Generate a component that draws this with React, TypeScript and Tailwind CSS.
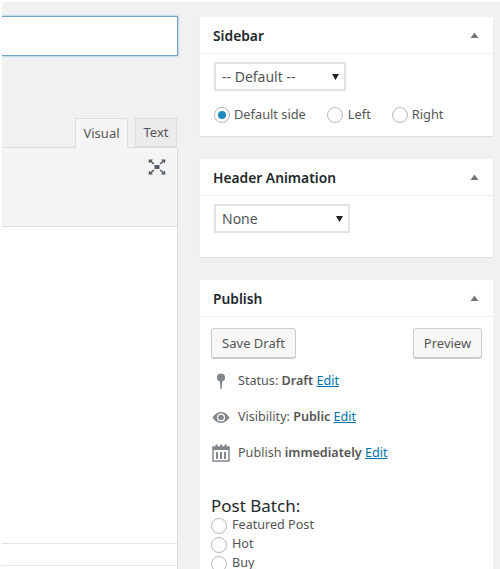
import React from 'react';

const font = "font-['Noto_Sans',sans-serif]";

const Caret = () => (
  <svg width="9" height="6" viewBox="0 0 9 6" className="text-[#72777c]">
    <path d="M0.5 6 L4.5 0.5 L8.5 6 Z" fill="currentColor" />
  </svg>
);

const SelectBox = ({ label, width }: { label: string; width: string }) => (
  <div className={`flex h-[29px] items-center justify-between border-2 border-[#e3e3e3] bg-white pl-[6px] pr-[5px] text-[14px] text-[#555] ${width}`}>
    <span>{label}</span>
    <svg width="7" height="6" viewBox="0 0 7 6">
      <path d="M0 0 H7 L3.5 6 Z" fill="#222" />
    </svg>
  </div>
);

const Radio = ({ checked }: { checked?: boolean }) => (
  <span className="flex h-[16px] w-[16px] shrink-0 items-center justify-center rounded-full border border-[#b4b9be] bg-white">
    {checked && <span className="h-[8px] w-[8px] rounded-full bg-[#1e8cbe]" />}
  </span>
);

const PanelHead = ({ title }: { title: string }) => (
  <div className="flex h-[37px] items-center justify-between border-b border-[#eee] pl-[13px] pr-[14px]">
    <h2 className="pt-[2px] text-[13.8px] font-semibold text-[#23282d]">{title}</h2>
    <Caret />
  </div>
);

const PinIcon = () => (
  <svg width="10" height="16" viewBox="0 0 10 16">
    <circle cx="5" cy="4.5" r="4" fill="#82878c" />
    <path d="M3.8 8 H6.2 L5.6 16 H4.4 Z" fill="#82878c" />
  </svg>
);

const EyeIcon = () => (
  <svg width="18" height="13" viewBox="0 0 18 13">
    <path d="M0.5 6.5 C3 2.5 6 1 9 1 C12 1 15 2.5 17.5 6.5 C15 10.5 12 12 9 12 C6 12 3 10.5 0.5 6.5 Z" fill="#82878c" />
    <circle cx="9" cy="6.5" r="4" fill="#fff" />
    <circle cx="9" cy="6.5" r="2.8" fill="#82878c" />
  </svg>
);

const CalendarIcon = () => (
  <svg width="18" height="18" viewBox="0 0 18 18">
    <rect x="1" y="3" width="16" height="14" fill="none" stroke="#82878c" strokeWidth="1.5" />
    <rect x="1" y="3" width="16" height="3" fill="#82878c" />
    <rect x="3.5" y="0.5" width="2" height="4" fill="#82878c" />
    <rect x="8" y="0.5" width="2" height="4" fill="#82878c" />
    <rect x="12.5" y="0.5" width="2" height="4" fill="#82878c" />
    <rect x="4" y="8" width="2" height="7" fill="#82878c" />
    <rect x="8" y="8" width="2" height="7" fill="#82878c" />
    <rect x="12" y="8" width="2" height="7" fill="#82878c" />
  </svg>
);

const MiscRow = ({ icon, children }: { icon: React.ReactNode; children: React.ReactNode }) => (
  <div className="flex h-[36px] items-center text-[12.6px] text-[#555]">
    <span className="flex w-[27px] shrink-0 justify-center pr-[8px]">{icon}</span>
    <span>{children}</span>
  </div>
);

const EditLink = () => <a className="text-[#0073aa] underline">Edit</a>;

const Button = ({ label, width }: { label: string; width: string }) => (
  <button className={`h-[30px] rounded-[3px] border border-[#ccc] bg-[#f7f7f7] pt-[1px] text-[13px] text-[#555] shadow-[0_1px_0_#ccc] ${width}`}>
    {label}
  </button>
);

export default function App() {
  return (
    <div className={`h-[569px] w-[500px] overflow-hidden border-l-2 border-t-2 border-white bg-[#f1f1f1] ${font}`}>
      <div className="flex h-full">
        {/* editor column */}
        <div className="w-[176px] shrink-0">
          <div className="mt-[14px] h-[40px] border border-l-0 border-[#6ea4c4] bg-white shadow-[0_0_2px_rgba(30,140,190,0.6)]" />
          <div className="mt-[62px] flex h-[30px] items-end justify-end border-b border-[#ddd] pr-[1px] text-[13px]">
            <div className="mb-[-1px] flex h-[30px] w-[53px] items-center justify-center border border-b-0 border-[#ddd] bg-[#f5f5f5] text-[#555]">
              Visual
            </div>
            <div className="ml-[7px] flex h-[29px] w-[42px] items-center justify-center border border-[#ddd] bg-[#ebebeb] text-[#555]">
              Text
            </div>
          </div>
          <div className="h-[549px] border-r border-[#ddd] bg-white">
            <div className="flex h-[79px] justify-end border-b border-[#ddd] bg-[#f5f5f5] pr-[11px] pt-[11px]">
              <svg width="18" height="16" viewBox="0 0 18 16" fill="#555d66">
                <rect x="6.5" y="6" width="5" height="4" />
                <path d="M0.5 0.5 H5 L3.6 1.9 L6.5 4.5 L5.3 5.6 L2.4 3 L1 4.5 Z" />
                <path d="M17.5 0.5 H13 L14.4 1.9 L11.5 4.5 L12.7 5.6 L15.6 3 L17 4.5 Z" />
                <path d="M0.5 15.5 H5 L3.6 14.1 L6.5 11.5 L5.3 10.4 L2.4 13 L1 11.5 Z" />
                <path d="M17.5 15.5 H13 L14.4 14.1 L11.5 11.5 L12.7 10.4 L15.6 13 L17 11.5 Z" />
              </svg>
            </div>
            <div className="h-[317px] border-b border-[#e5e5e5]" />
            <div className="h-[22px] border-b border-[#e5e5e5]" />
          </div>
        </div>

        {/* side column */}
        <div className="ml-[22px] w-[293px] shrink-0 pt-[15px]">
          <section className="h-[119px] bg-white shadow-[0_1px_1px_rgba(0,0,0,0.08)]">
            <PanelHead title="Sidebar" />
            <div className="pl-[14px] pt-[8px]">
              <SelectBox label="-- Default --" width="w-[132px]" />
              <div className="mt-[14px] flex items-center text-[12.8px] text-[#555]">
                <Radio checked />
                <span className="ml-[4px]">Default side</span>
                <span className="ml-[21px]"><Radio /></span>
                <span className="ml-[5px]">Left</span>
                <span className="ml-[21px]"><Radio /></span>
                <span className="ml-[4px]">Right</span>
              </div>
            </div>
          </section>

          <section className="mt-[23px] h-[98px] bg-white shadow-[0_1px_1px_rgba(0,0,0,0.08)]">
            <PanelHead title="Header Animation" />
            <div className="pl-[14px] pt-[8px]">
              <SelectBox label="None" width="w-[136px]" />
            </div>
          </section>

          <section className="mt-[23px] h-[320px] bg-white">
            <PanelHead title="Publish" />
            <div className="flex justify-between pl-[11px] pr-[11px] pt-[11px]">
              <Button label="Save Draft" width="w-[85px]" />
              <Button label="Preview" width="w-[69px]" />
            </div>
            <div className="mt-[5px] pl-[11px]">
              <MiscRow icon={<PinIcon />}>Status: <b className="font-semibold">Draft</b> <EditLink /></MiscRow>
              <MiscRow icon={<EyeIcon />}>Visibility: <b className="font-semibold">Public</b> <EditLink /></MiscRow>
              <MiscRow icon={<CalendarIcon />}>Publish <b className="font-semibold">immediately</b> <EditLink /></MiscRow>
            </div>
            <div className="mt-[24px] pl-[11px]">
              <div className="text-[17px] leading-[21px] text-[#23282d]">Post Batch:</div>
              {['Featured Post', 'Hot', 'Buy'].map((label) => (
                <div key={label} className="flex h-[19px] items-center text-[12.6px] text-[#555]">
                  <Radio />
                  <span className="ml-[5px]">{label}</span>
                </div>
              ))}
            </div>
          </section>
        </div>
      </div>
    </div>
  );
}
